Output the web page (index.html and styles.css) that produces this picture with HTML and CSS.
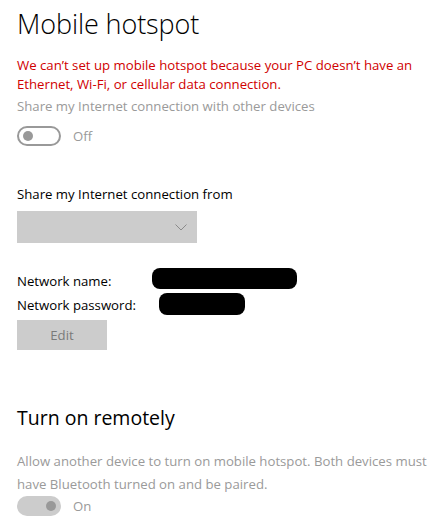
FILE: index.html
```html
<!DOCTYPE html>
<html>
<head>
<meta charset="utf-8">
<link rel="stylesheet" href="styles.css">
</head>
<body>
<main class="page">
  <h1 class="title">Mobile hotspot</h1>
  <p class="error">We can’t set up mobile hotspot because your PC doesn’t have an Ethernet, Wi-Fi, or cellular data connection.</p>
  <p class="muted label-share">Share my Internet connection with other devices</p>
  <div class="toggle-row">
    <span class="toggle toggle-off"><span class="knob"></span></span>
    <span class="toggle-text">Off</span>
  </div>

  <p class="label label-from">Share my Internet connection from</p>
  <div class="dropdown">
    <svg class="chevron" width="12" height="7" viewBox="0 0 12 7"><path d="M0.5 0.5 L6 6 L11.5 0.5" fill="none" stroke="#8a8a8a" stroke-width="1"/></svg>
  </div>

  <div class="net-row net-name">
    <span class="net-label">Network name:</span>
    <span class="redact redact-name"></span>
  </div>
  <div class="net-row net-pass">
    <span class="net-label">Network password:</span>
    <span class="redact redact-pass"></span>
  </div>
  <button class="btn">Edit</button>

  <h2 class="subtitle">Turn on remotely</h2>
  <p class="muted desc">Allow another device to turn on mobile hotspot. Both devices must have Bluetooth turned on and be paired.</p>
  <div class="toggle-row toggle-row-on">
    <span class="toggle toggle-on"><span class="knob"></span></span>
    <span class="toggle-text">On</span>
  </div>
</main>
</body>
</html>
```
FILE: styles.css
```css
* { box-sizing: border-box; }
html, body { margin: 0; padding: 0; background: #fff; }
body {
  font-family: "Segoe UI", "Open Sans", "Noto Sans", sans-serif;
  font-size: 13.2px;
  color: #000;
}
.page {
  padding: 0 0 0 17px;
  display: flex;
  flex-direction: column;
  align-items: flex-start;
}
p { margin: 0; }
.title {
  margin: 4px 0 0 0;
  font-weight: 300;
  font-size: 27px;
  line-height: 40px;
  letter-spacing: -0.1px;
}
.error {
  margin-top: 12px;
  color: #d00000;
  line-height: 19px;
  width: 412px;
}
.muted { color: #9a9a9a; }
.label-share { margin-top: 2px; line-height: 20px; }
.toggle-row {
  margin-top: 10px;
  display: flex;
  align-items: center;
  height: 20px;
}
.toggle {
  width: 44px;
  height: 20px;
  border-radius: 10px;
  position: relative;
  display: inline-block;
}
.toggle-off { border: 2px solid #999; }
.toggle-off .knob {
  position: absolute;
  left: 4px; top: 3px;
  width: 10px; height: 10px;
  border-radius: 50%;
  background: #999;
}
.toggle-on { background: #ccc; }
.toggle-on .knob {
  position: absolute;
  right: 5px; top: 5px;
  width: 10px; height: 10px;
  border-radius: 50%;
  background: #999;
}
.toggle-text { margin-left: 12px; color: #9a9a9a; line-height: 20px; }
.label-from { margin-top: 38px; line-height: 20px; }
.dropdown {
  margin-top: 7px;
  width: 180px;
  height: 32px;
  background: #ccc;
  display: flex;
  align-items: center;
  justify-content: flex-end;
  padding-right: 10px;
}
.net-row {
  display: flex;
  align-items: center;
  height: 24px;
}
.net-name { margin-top: 26px; }
.net-pass { margin-top: 0; }
.net-label { line-height: 20px; width: 135px; }
.redact {
  display: inline-block;
  background: #000;
  height: 21px;
  border-radius: 8px;
  position: relative;
  top: -3px;
}
.redact-name { width: 145px; }
.redact-pass { width: 86px; margin-left: 7px; height: 22px; top: -1px; }
.btn {
  margin-top: 3px;
  width: 90px;
  height: 30px;
  background: #ccc;
  border: none;
  font-family: inherit;
  font-size: 13.2px;
  color: #7a7a7a;
  padding: 0;
}
.subtitle {
  margin: 54px 0 0 0;
  font-weight: 400;
  font-size: 19.5px;
  line-height: 28px;
}
.desc { margin-top: 18px; line-height: 23px; width: 418px; }
.toggle-row-on { margin-top: 0; }
```
